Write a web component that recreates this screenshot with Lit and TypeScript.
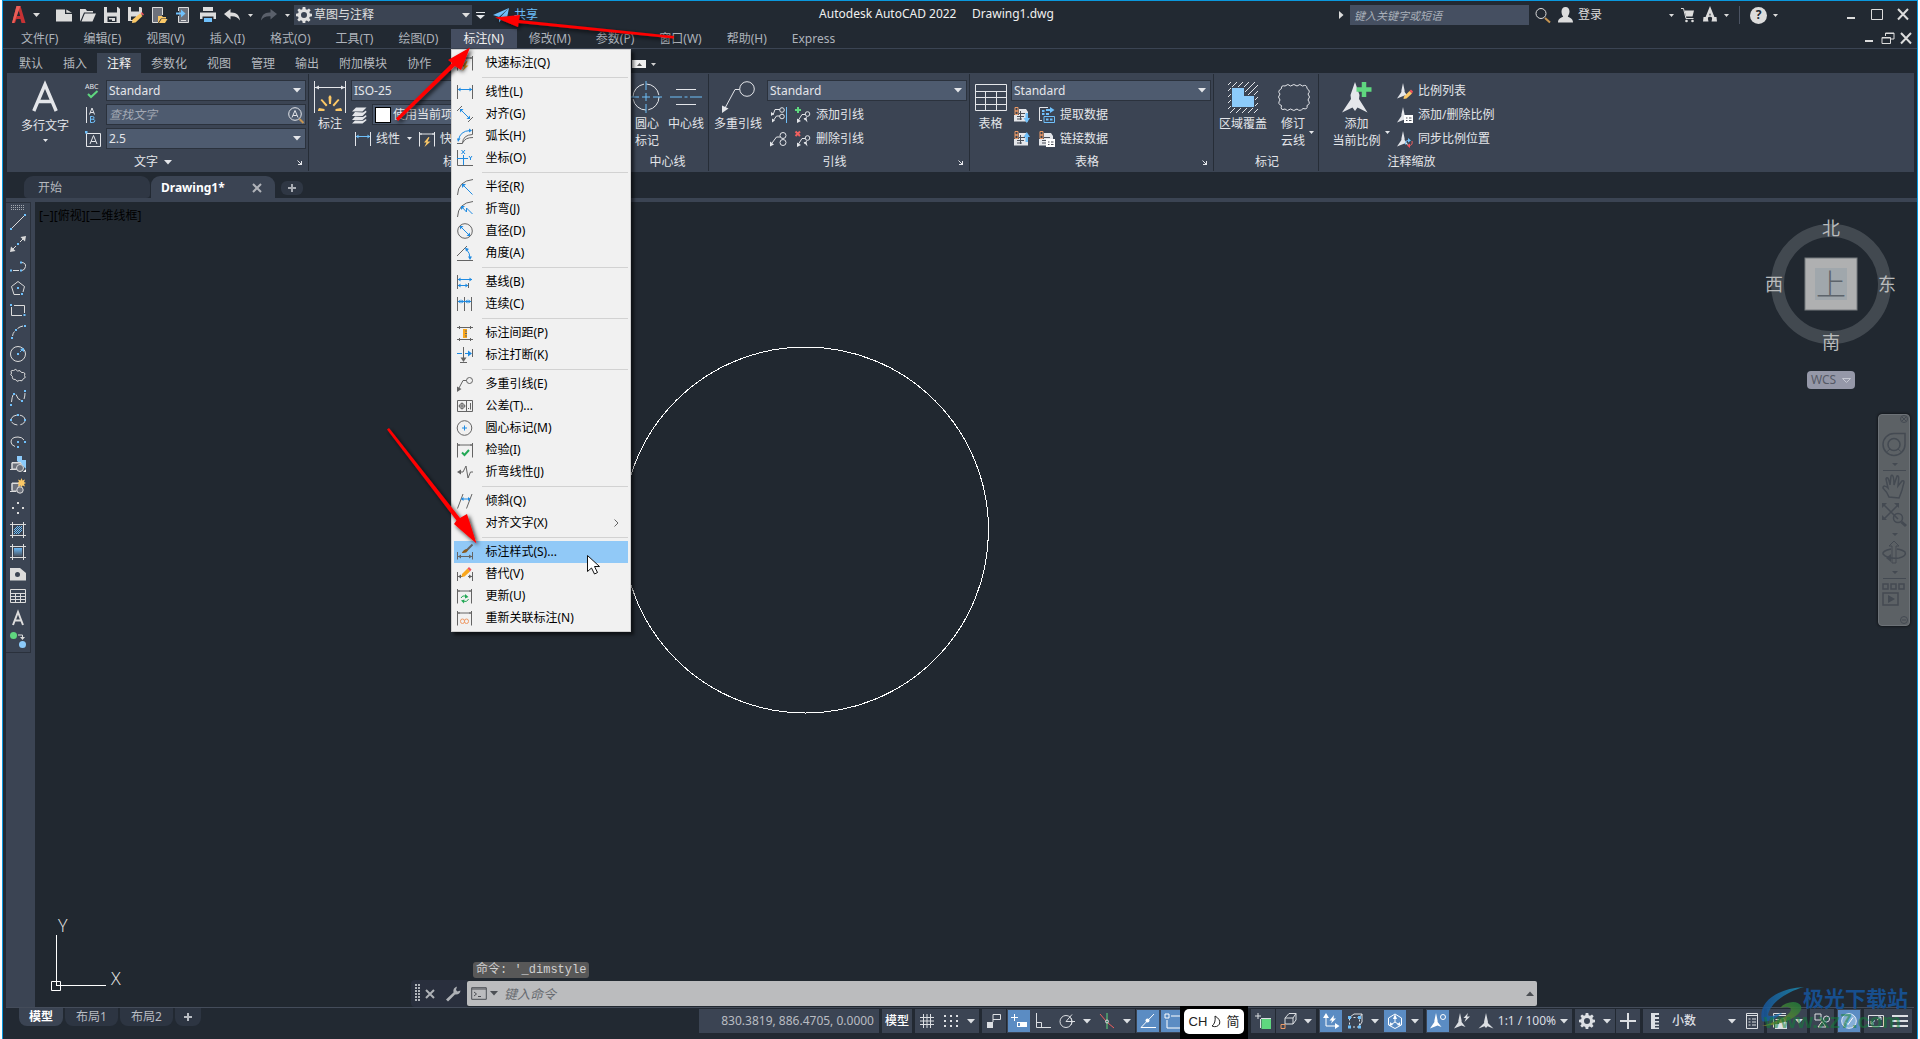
import { LitElement, html, svg, css, nothing, type TemplateResult, type SVGTemplateResult } from "lit";
import { customElement } from "lit/decorators.js";
import { classMap } from "lit/directives/class-map.js";

type Art = SVGTemplateResult;

const icon = (w: number, h: number, art: Art): TemplateResult =>
  html`<svg class="ic" width=${w} height=${h} viewBox="0 0 ${w} ${h}" aria-hidden="true">${art}</svg>`;
const i16 = (art: Art) => icon(16, 16, art);

const caret = html`<svg class="ic" width="8" height="5" viewBox="0 0 8 5" aria-hidden="true"><path class="f" d="M0 0H8L4 4.5Z" /></svg>`;
const caretS = html`<svg class="ic" width="5" height="3" viewBox="0 0 5 3" aria-hidden="true"><path class="f" d="M0 0H5L2.5 3Z" /></svg>`;

const gear = svg`<path class="f" fill-rule="evenodd" d="M6.7 0h2.6l.4 2.2 1.4.6L13 1.500 14.700 3.200 13.300 5l.6 1.400L16 6.700v2.600l-2.200.4-.6 1.400 1.300 1.900-1.800 1.700-1.800-1.300-1.400.6L9.300 16H6.700l-.4-2.100-1.400-.6-1.900 1.300L1.300 12.800 2.600 11 2 9.600 0 9.300V6.700l2.100-.4.600-1.400L1.400 3.100 3.100 1.400 5 2.700l1.300-.5ZM8 5a3 3 0 1 0 0 6a3 3 0 1 0 0-6Z"/>`;
const arrowhead = svg`<path class="f" d="M8 0L9.900 8.500V10L15.500 15.500 9.500 13.200 8 15 6.500 13.200.5 15.500 6.100 10V8.500Z"/>`;
const arrowheadS = svg`<path class="f" d="M6 0L7.600 7.500V9L11.500 14 7.500 12.500 0 15.500 4.400 9V7.500Z"/>`;

const art = {
  newDoc: svg`<path class="f" d="M0 2.500H9V7H16V14.500H0ZM10.300 2.500 16 5.800H10.300Z"/>`,
  open: svg`<path class="f" d="M0 2H5.500L7 4H13V5.500H4L1.500 11.500 0 14.500ZM4.800 6.500H16L12.500 14.500H1.500Z"/>`,
  save: svg`<path class="f" fill-rule="evenodd" d="M0 0H14L16 2V16H0ZM3 0V5.500H13V0ZM3.500 9.500V15H12.500V9.500Z"/><path class="f" d="M5 11H11V14H8V12.500H5Z"/>`,
  saveAs: svg`<path class="f" fill-rule="evenodd" d="M0 0H13L14 1V7L8 14H0ZM3 0V4.500H11V0ZM3 9.500V13H8V9.500Z"/><path class="y" d="M4.500 12.500 12 6.500 14.500 9 7.500 15.500 4 16Z"/><path class="r" d="M12.500 6 14 5.200 16 7.500 15 8.500Z"/>`,
  openWeb: svg`<path class="g6" stroke="none" d="M0 0H10V9H6V15H0Z"/><path d="M.5.5H10.500V8M.5.5V15.500H6"/><path class="y" d="M6 9H10L11 10H14V11.500H9L6 16ZM9.500 12H15.500L13 16H7Z"/>`,
  saveWeb: svg`<path class="g6" stroke="none" d="M3 0H12V16H3Z"/><path d="M2.500 4V.5H12.500V15.500H2.500V9M5 13.500H10"/><path class="bf" d="M0 5.500H5V2.500L9.500 6.500 5 10.500V7.500H0Z"/>`,
  print: svg`<path class="f" fill-rule="evenodd" d="M3 0H13V4H3ZM0 5.500H16V12H13.500V9.500H2.500V12H0Z"/><path class="bf" d="M4 11H12V15H4Z"/>`,
  undo: svg`<path class="f" d="M0 7 6.500 2V5.500C12 5 15.500 8 16 13.500C13.500 10 11 9 6.500 9.300V12.500Z"/>`,
  redo: svg`<path class="f" d="M16 7 9.500 2V5.500C4 5 .5 8 0 13.500C2.500 10 5 9 9.500 9.300V12.500Z"/>`,
  plane: svg`<path class="bf" d="M0 8 16 1 6 10 5.500 9.700ZM7 10.500 16 1 13.500 13.500 9.500 11.800ZM6 11.500 8.300 12.500 6 15.500Z"/>`,
  find: svg`<circle cx="6" cy="6.500" r="5"/><path class="ys" d="M10 11 15 15.500" stroke-width="2"/>`,
  person: svg`<path class="f" d="M8.500 0C11 0 12.500 2 12.500 4.500 12.500 7 11 9 10.800 9.500 12 10.800 16 11 16 15.500H1C1 11 5 10.800 6.200 9.500 5.500 8.800 4.500 7 4.500 4.500 4.500 2 6 0 8.500 0Z"/>`,
  cart: svg`<path d="M1 1.500H3.500L6 11.500H13.500"/><path class="f" d="M4.500 3.500H14L12.500 9.500H6Z"/><circle class="f" cx="6.500" cy="14" r="1.300"/><circle class="f" cx="12.500" cy="14" r="1.300"/>`,
  adesk: svg`<path d="M4 12.500 8 2.500 12 12.500" stroke-width="2.600"/><path class="f" d="M1.500 10H5.500L6.500 14.500H1ZM10.500 10H14.500L15 14.500H9.500ZM4 9Q8 7.500 12 9V10.500Q8 9 4 10.500Z"/>`,
  min: svg`<path d="M3 10H11" stroke-width="2"/>`,
  max: svg`<path d="M2.500 2.500H13.500V12.500H2.500Z"/>`,
  restore: svg`<path d="M5.500 5V2H14V8H11M2 6.500H10.500V12.500H2ZM2 7H10.500M5.500 2.500H14"/>`,
  close: svg`<path d="M3 2 13 12.500M13 2 3 12.500" stroke-width="2"/>`,

  spell: svg`<text class="t" x="0" y="6" font-size="7">ABC</text><path class="gs" d="M3 11 6 14 12.500 8" stroke-width="2"/>`,
  alignText: svg`<path d="M1.500 0V16M4.500 7.500 7 1 9.500 7.500M5.300 5.500H8.700"/><path class="b" d="M5.500 9.500H7.500Q9.500 9.500 9 11.500 8.500 12.200 7.500 12.200H5.500V9.500V15.500H7.500Q10 15.500 9.800 13.500 9.500 12.200 7.500 12.200"/>`,
  textH: svg`<path d="M1.500 2.500H15.500V15.500H1.500Z"/><path d="M5 13 8.500 4.500 12 13M6.200 10.500H10.800"/><path class="bf" d="M0 0H2.500V2.500H0Z"/>`,
  findA: svg`<circle cx="7" cy="7" r="6.300"/><path d="M4 10.500 7 3.500 10 10.500M5.200 8.500H8.800"/><path class="ys" d="M11.500 12 15.500 16" stroke-width="2"/>`,
  bigA: svg`<path d="M1.800 28 13 1.500 24.200 28M6 18.500H20" stroke-width="3.400"/>`,
  dimBig: svg`<path d="M.5 0V32M31.500 0V32M1 6.500H31"/><path class="f" d="M1 6.500 5 4.500V8.500ZM31 6.500 27 4.500V8.500Z"/><path class="y" d="M14.500 16 16 14 17.500 16 17 23H15ZM6.500 19 8 18 13.500 24 12 25.500ZM25.500 19 24 18 18.500 24 20 25.500ZM4 29 5 27 10.500 28V30H4ZM28 29 27 27 21.500 28V30H28Z"/>`,
  layers: svg`<path class="f" d="M5 .5H15.500L11.500 4.500H1ZM4 5 12 5.500 15 3.500 15.500 5 11.500 9H1ZM4 9.500 12 10 15 8 15.500 9.500 11.500 13H1ZM4 13.500 12 13.700 15 12 15.500 13.300 11.500 16.500H1Z"/>`,
  linear: svg`<path d="M.5 1V15M15.500 1V15"/><path class="b" d="M1 5.500H15"/><path class="bf" d="M1 5.500 3.500 3.500V7.500ZM15 5.500 12.500 3.500V7.500Z"/>`,
  quick: svg`<path d="M.5 1V15.500M15.500 1V15.500M1 3H15M2 2V4M14 2V4"/><path class="y" d="M9.500 6 5 11.500H7.500L5.500 16 11.500 10.500H8.500L10.500 6.500Z"/>`,
  centreBig: svg`<circle cx="15" cy="16" r="13" stroke-dasharray="18 2.400"/><path class="b" d="M15 0V9M15 12V20M15 23V32M-1 16H8M11 16H19M22 16H31"/>`,
  lineBig: svg`<path d="M6 8.500H26M6 23.500H26"/><path class="b" d="M0 16H12M14.500 16H17.500M20 16H32"/>`,
  leaderBig: svg`<circle cx="26" cy="8" r="7.300"/><path d="M18.500 8.500H14L3.500 28"/><path class="f" d="M1 32V24.500L7.500 27.500Z"/>`,
  lead1: svg`<path d="M3 8 5 2.500H10M3 14 6.500 9H10"/><circle cx="12" cy="3" r="2.300"/><circle cx="12" cy="9.500" r="2.300"/><path class="f" d="M1 9V5L4 7ZM2 15.500V11.500L5 13.500Z"/><path class="b" d="M16.500 0V16"/>`,
  lead2: svg`<path d="M2 12 6.500 6H10"/><circle cx="13" cy="4.500" r="3"/><circle cx="13" cy="11.500" r="3"/><path class="f" d="M0 15.500V10.500L4 13.500Z"/>`,
  leadAdd: svg`<path class="gs" d="M3 0V6M0 3H6" stroke-width="2"/><path d="M3.500 13 7 7.500H10M12 9.500 9.500 13"/><circle cx="12.500" cy="7" r="2.300"/><path class="f" d="M2 16V11.500L6 14ZM8.500 11H11.500L12.500 15.500Z"/>`,
  leadDel: svg`<path class="rs" d="M.5.5 5 5M5 .5.5 5" stroke-width="2"/><path d="M3.500 13 7 7.500H10M12 9.500 9.500 13"/><circle cx="12.500" cy="7" r="2.300"/><path class="f" d="M2 16V11.500L6 14ZM8.500 11H11.500L12.500 15.500Z"/>`,
  tableBig: svg`<path d="M.5.500H31.500V26.500H.5ZM.5 7.500H31.500M.5 13.500H31.500M.5 20.500H31.500M10.500 7.500V26M21.500 7.500V26"/>`,
  sheetDown: svg`<path class="f" d="M5 2H12L14 5V14.500H0V8H5Z"/><path class="hole" d="M5 6.500H11M3 9.500H10M3 12H8M6.500 4V13"/><path class="os" d="M1 .5H4V4H1ZM1 4H4V7.500H1Z"/><path class="bf" d="M11.500 6H14V11H16L12.800 16 9.500 11H11.500Z"/>`,
  sheetUp: svg`<path class="f" d="M5 2H12L14 5V14.500H0V8H5Z"/><path class="hole" d="M5 6.500H11M3 9.500H10M3 12H8M6.500 4V13"/><path class="os" d="M1 .5H4V4H1ZM1 4H4V7.500H1Z"/><path class="bf" d="M11.500 11H14V6H16L12.800 1 9.500 6H11.500Z"/>`,
  extract: svg`<path d="M5 .5H.5V13.500H3M5 .5H9"/><path class="bf" d="M3 3H5.500V5H3ZM3 6H5.500V8H3ZM7 6H10V8H7ZM7 2H11V0L15.500 3 11 6V4H7Z"/><path class="b" d="M5 9.500H15.500V15.500H5Z"/><path class="bf" d="M7 11.500H9.500V13.500H7ZM11 11.500H13.500V13.500H11Z"/>`,
  linkData: svg`<path class="f" d="M5 2H12L14 5V14.500H0V8H5Z"/><path class="hole" d="M5 6.500H11M3 9.500H7M3 12H7"/><path class="os" d="M1 .5H4V4H1ZM1 4H4V7.500H1Z"/><path class="w" d="M7 8H16V16H7Z"/><path class="hole" d="M9 11H10.500M12 11H14.500M9 13.500H10.500M12 13.500H14.500"/>`,
  wipeout: svg`<path d="M1 4 4 1M1 10 10 1M1 16 16 1M1 22 22 1M1 28 28 1M3 32 31 4M9 32 31 10M15 32 31 16M21 32 31 22M27 32 31 28"/><path class="bg" d="M4 6H18V14H28V27H4Z"/><path class="bf2" d="M5 7H17V15H27V26H5Z"/>`,
  cloudBig: svg`<path d="M3.500 4.500Q3 1 7 2 10 -1 12.500 2 16 -1 19 2 22 -1 24.500 2 29 0 29 4.500 33 7 30 10 33 13 30 16 33 20 29 21.500 30 26 25 24.500 22 28 19 25 16 28 12.500 25 9 28 7 25 2 27 3.500 21.500 -1 20 2 16 -1 13 2 10 -1 7 3.500 4.500Z"/>`,
  scaleBig: svg`<path class="f" d="M13 1 17.500 14 17 18 25.500 31.500 15.500 26.500 13 30 10.500 26.500 0 31.500 9 18 8.500 14Z"/><path class="gs" d="M22 1V16M14.500 8.500H29.500" stroke-width="4.500"/>`,
  scaleList: svg`${arrowheadS}<path class="y" d="M7 13.500 12.500 8 15 10.500 9.500 15.500 6.500 16Z"/><path class="r" d="M12.500 8 14 6.500 16 8.500 15 10.500Z"/>`,
  scaleAdd: svg`${arrowheadS}<path class="w" d="M7 8H16V16H7Z"/><path class="hole" d="M9 11H10.500M12 11H14.500M9 13.500H10.500M12 13.500H14.500"/>`,
  scaleSync: svg`${arrowheadS}<path class="b" d="M8.500 13.500Q8 9 12 9.500"/><path class="bf" d="M11 7 14 9.500 11 11.500Z"/><path class="rs" d="M15 10Q16 14.500 12 14.500"/><path class="r" d="M13 12.500 10 14.500 13 17Z"/>`,
  launcher: svg`<path d="M.5.500 4 4M4.500 1V5M1 4.500H5"/>`,
  wrench: svg`<path class="f" d="M1 13.500 8.500 6.500Q7.500 2 12 .5L11 4 12.500 5.500 15.500 4.500Q15 9 10 8.500L3 15.500Z"/>`,
  prompt: svg`<path d="M.7.7H15.300V12.300H.7ZM.7 2H15.300M3 5 5.500 7 3 9M7 9.500H10"/>`,
};

const drawTools: [string, Art][] = [
  ["直线", svg`<path d="M2 14 14 2"/><path class="bf" d="M0 14H2V16H0ZM14 0H16V2H14Z"/>`],
  ["构造线", svg`<path d="M2 14 6 10M10 6 14 2"/><path class="f" d="M0 16 1 10.500 5.500 15ZM16 0 10.500 1 15 5.500Z"/><path class="bf" d="M7 7H9V9H7Z"/>`],
  ["多段线", svg`<path d="M3 12.500H9M12 4.500Q16 5 15.500 8.500 15 12 12 12.500"/><path class="bf" d="M0 11.500H2V13.500H0ZM10 3.500H12V5.500H10ZM10 11.500H12V13.500H10Z"/>`],
  ["多边形", svg`<path d="M10 14.500H4L1.500 6.500 8 1.500 14.500 6.500 13 12"/><path class="bf" d="M7 7H9V9H7ZM11 13H13V15H11Z"/>`],
  ["矩形", svg`<path d="M4 3.500H14.500V11M12 13.500H1.500V5"/><path class="bf" d="M0 2H2V4H0ZM13.500 12H15.500V14H13.500Z"/>`],
  ["圆弧", svg`<path d="M2.500 12Q3 9 4.500 7.500M7.500 4.500Q10 2.500 13 2"/><path class="bf" d="M1 13H3V15H1ZM5 5H7V7H5ZM14 1H16V3H14Z"/>`],
  ["圆", svg`<circle cx="8" cy="8" r="7.500"/><path class="b" d="M10 6 12 4"/><path class="bf" d="M7 7H9V9H7ZM14 2V6L10 3Z"/>`],
  ["修订云线", svg`<path d="M1.500 5Q0 2 3.500 2.500 6 0 7.500 3 10.500 1.500 11.500 4.500 16 4 14.500 7.500 16.500 10 13.500 10.500 12.500 14 9.500 12.500 6.500 14.500 5.500 11.500 1.500 11.500 2.500 8.500 -.5 7 1.500 5Z"/>`],
  ["样条曲线", svg`<path d="M1.500 12Q2 7 3 5M6 4.500Q8 10 10.500 10M14 9Q15 6 15 3"/><path class="bf" d="M0 14H2V16H0ZM3 3H5V5H3ZM11 10H13V12H11ZM14 0H16V2H14Z"/>`],
  ["椭圆", svg`<ellipse cx="8" cy="8" rx="7" ry="5" stroke-dasharray="7 3"/><path class="bf" d="M0 7H2V9H0ZM14 7H16V9H14ZM7 2H9V4H7Z"/>`],
  ["椭圆弧", svg`<path d="M14 6Q12 3 8 3 1 3 1 8 1 11 5 12.500"/><path class="bf" d="M7 7H9V9H7ZM14 7H16V9H14ZM7 12H9V14H7Z"/>`],
  ["插入块", svg`<path class="bf2" d="M7 0H12V4H16V13L12 9 7 5Z"/><path class="g6" d="M2 7H11V13H2Z"/><path d="M2 13V6.500H11M0 13.500H7"/><circle class="g6" cx="10" cy="12" r="3.500"/><path class="w" d="M13 16H16V13Z"/>`],
  ["创建块", svg`<path class="g6" d="M2 5H9V13H2Z"/><path d="M2 12V5.500H9M0 13.500H6"/><circle class="g6" cx="10" cy="12" r="3.200"/><path class="y" d="M11.500 0 12.500 2.500 15 1.500 14 4 16 5 14 6 15 8.500 12.500 7.500 11.500 9.500 10.500 7.500 8 8.500 9 6 7.500 5 9 4 8 1.500 10.500 2.500Z"/>`],
  ["多点", svg`<path class="f" d="M7 2H9V4H7ZM2 7H4V9H2ZM12 7H14V9H12ZM7 12H9V14H7Z"/>`],
  ["图案填充", svg`<path d="M2.500 0V16M13.500 0V16M0 2.500H16M0 13.500H16"/><path class="b" d="M4 8 8 4M4 12 12 4M8 12 12 8M4 10 10 4M6 12 12 6"/>`],
  ["渐变色", svg`<defs><linearGradient id="gr" x1="0" y1="0" x2="0" y2="1"><stop offset="0" stop-color="#6ab8f5"/><stop offset="1" stop-color="#4b5563"/></linearGradient></defs><path d="M2.500 0V16M13.500 0V16M0 2.500H16M0 13.500H16"/><rect x="4" y="4" width="8" height="8" fill="url(#gr)" stroke="none"/>`],
  ["面域", svg`<path class="f" fill-rule="evenodd" d="M0 2H10L16 7V14.500H0ZM7.500 6A2.500 2.500 0 1 0 7.500 11A2.500 2.500 0 1 0 7.500 6Z"/>`],
  ["表格", svg`<path d="M.5 1.500H15.500V14.500H.5ZM.5 5.500H15.500M.5 8.500H15.500M.5 11.500H15.500M5.500 5.500V14.500M10.500 5.500V14.500"/>`],
  ["多行文字", svg`<path d="M3 15 8 2 13 15M5 10.500H11" stroke-width="2"/>`],
  ["添加选定对象", svg`<circle class="gf" cx="3.500" cy="3.500" r="3.500"/><circle class="bf2" cx="12.500" cy="12.500" r="3.500"/><path d="M8 3H12.500V6"/><path class="f" d="M10 5H15L12.500 8Z"/>`],
];

interface Entry { label: string; art?: Art; hot?: boolean; sub?: boolean }
const dimMenu: Entry[][] = [
  [{ label: "快速标注(Q)", art: art.quick }],
  [
    { label: "线性(L)", art: art.linear },
    { label: "对齐(G)", art: svg`<path d="M0 5 5 0M11 16 16 11"/><path class="b" d="M3 3 13 13"/><path class="bf" d="M3 3H6.500L3 6.500ZM13 13H9.500L13 9.500Z"/>` },
    { label: "弧长(H)", art: svg`<path d="M0 15.500H5.500V15Q6 7 15.500 6.500V1"/><path d="M6 14.500Q8 9.500 16 9.500"/><path class="b" d="M1.500 12Q3 3 13 2.500"/><path class="bf" d="M1 14 0 10.500H3.500ZM15 2.500 12 .5V4.500Z"/>` },
    { label: "坐标(O)", art: svg`<path d="M.5 0V15.500H16"/><path class="b" d="M0 8.500H11M6.500 5V15M4.500 0 8 4M8 0 4.500 4M12 6 13.500 8 15 6M13.500 8V10"/>` },
  ],
  [
    { label: "半径(R)", art: svg`<path d="M.5 16Q1 2 16 .5"/><path class="b" d="M6 6 15.500 15.500"/><path class="bf" d="M5 5H9L5 9Z"/>` },
    { label: "折弯(J)", art: svg`<path d="M.5 16Q1 2 16 .5"/><path class="b" d="M5 6 9.500 11V7L15.500 13"/><path class="bf" d="M4 5H8L4 9Z"/>` },
    { label: "直径(D)", art: svg`<circle cx="8" cy="8" r="7.300"/><path class="b" d="M3 3 13 13"/><path class="bf" d="M3 3H6.500L3 6.500ZM13 13H9.500L13 9.500Z"/>` },
    { label: "角度(A)", art: svg`<path d="M0 11 10 1M0 15.500H16"/><path class="b" d="M9.500 4.500Q13 8 13 13"/><path class="bf" d="M8 2.500 12 4 9 6.500ZM13 15 11 11.500H15Z"/>` },
  ],
  [
    { label: "基线(B)", art: svg`<path d="M.5 1V15M11.500 9V14"/><path class="b" d="M1 5.500H15M1 11.500H11"/><path class="bf" d="M1 5.500 3.500 3.500V7.500ZM15 5.500 12.500 3.500V7.500ZM1 11.500 3.500 9.500V13.500ZM11 11.500 8.500 9.500V13.500Z"/>` },
    { label: "连续(C)", art: svg`<path d="M.5 1V15M7.500 1V15M14.500 1V15"/><path class="b" d="M1 5.500H14"/><path class="bf" d="M1 5.500 3.500 3.500V7.500ZM7 5.500 4.500 3.500V7.500ZM8 5.500 10.500 3.500V7.500ZM14 5.500 11.500 3.500V7.500Z"/>` },
  ],
  [
    { label: "标注间距(P)", art: svg`<path d="M0 2.500H16M0 14.500H16M2.500 1V4M13.500 1V4M2.500 13V16M13.500 13V16"/><path class="y" d="M6 4H10V13H6Z"/><path d="M8 6H10M8 8.500H10M8 11H10"/>` },
    { label: "标注打断(K)", art: svg`<path d="M15.500 2V10M6.500 0V12M3 15.500H10"/><path class="b" d="M0 6.500H5M8 6.500H13"/><path class="bf" d="M15 6.500 11 3.500V9.500Z"/><path class="f" d="M3.500 10.500H9.500L6.500 15Z"/>` },
  ],
  [
    { label: "多重引线(E)", art: svg`<circle cx="12.500" cy="4.500" r="3"/><path d="M9.500 4.500H6L2 12"/><path class="f" d="M0 16V10.500L4.500 13Z"/>` },
    { label: "公差(T)...", art: svg`<path d="M.5 2.500H15.500V13.500H.5ZM9.500 2.500V13.500"/><circle cx="5" cy="8" r="2.500"/><path d="M1.500 8H8.500M5 4.500V11.500M13.500 5V11.500M11 10.500H12"/>` },
    { label: "圆心标记(M)", art: svg`<circle cx="7.500" cy="8" r="7.300"/><path class="b" d="M5 8H10M7.500 5.500V10.500"/>` },
    { label: "检验(I)", art: svg`<path d="M.5 1V15.500M15.500 1V15.500M1 3H15M2 2V4M14 2V4"/><path class="gs" d="M5 10.500 7.500 13 12 8" stroke-width="2"/>` },
    { label: "折弯线性(J)", art: svg`<path d="M2 8H6L9 2 11 14 13.500 8H16"/><path class="f" d="M0 8 4 5.500V10.500Z"/>` },
  ],
  [
    { label: "倾斜(Q)", art: svg`<path d="M.5 15.500 6 1M9.500 15.500 15 1"/><path class="b" d="M4.500 6H13"/><path class="bf" d="M4 6 6.500 4V8ZM13.500 6 11 4V8Z"/>` },
    { label: "对齐文字(X)", sub: true },
  ],
  [
    { label: "标注样式(S)...", hot: true, art: svg`<path d="M.5 8V15.500M15.500 8V15.500M1 12.500H15"/><path class="f" d="M1 12.500 4 10.500V14.500ZM15 12.500 12 10.500V14.500Z"/><path d="M15.500.5 10 6" stroke-width="2"/><path class="br" d="M5 8.500Q7 5 10 5L11 6.500Q9.500 9.500 5 9Z"/>` },
    { label: "替代(V)", art: svg`<path d="M.5 6V15M15.500 6V15M1 10.500H6M11 10.500H15"/><path class="f" d="M1 10.500 4 8.500V12.500ZM15 10.500 12 8.500V12.500Z"/><path class="y" d="M5 8 10.500 2.500 13 5.500 7.500 10.500 4.500 11Z"/><path class="r" d="M10.500 2.500 12 1 14.500 3.500 13 5.500Z"/>` },
    { label: "更新(U)", art: svg`<path d="M.5 1V15.500M14.500 1V15.500M1 3H14M2 2V4M13 2V4"/><path class="gs" d="M4 10Q5 7 9 8M11.500 11Q10 14.500 6 13"/><path class="gf" d="M8 6 11.500 9 8 10.500ZM7.500 11.500 4 12.500 7 15.500Z"/>` },
    { label: "重新关联标注(N)", art: svg`<path d="M.5 1V15.500M14.500 1V15.500M1 3H14M2 2V4M13 2V4"/><rect class="os" x="3.500" y="9" width="4" height="4.500" rx="2"/><rect class="os" x="7.500" y="9" width="4" height="4.500" rx="2"/>` },
  ],
];

const menusLeft = ["文件(F)", "编辑(E)", "视图(V)", "插入(I)", "格式(O)", "工具(T)", "绘图(D)"];
const menusRight = ["修改(M)", "参数(P)", "窗口(W)", "帮助(H)", "Express"];
const ribbonTabs = ["默认", "插入", "注释", "参数化", "视图", "管理", "输出", "附加模块", "协作"];

const st = {
  grid: svg`<path d="M4.500 1V15M8 1V15M11.500 1V15M1 4.500H15M1 8H15M1 11.500H15"/>`,
  snap: svg`<path stroke-width="2" stroke-dasharray="2 4" d="M1 3H16M1 8H16M1 13H16"/>`,
  infer: svg`<path d="M7 9V1.500H14.500V6.500H7"/><path class="f" d="M1 9H7V15H1Z"/>`,
  dyn: svg`<path d="M3.500 1V8M0 4.500H7"/><path class="w" d="M6 9H16V14H6Z"/><path class="bluehole" d="M8 10V13"/>`,
  ortho: svg`<path d="M1.500 0V14.500H16M1.500 9.500H6.500V14.500"/>`,
  polar: svg`<circle cx="7" cy="8.500" r="6"/><path d="M7 8.500H16M7 8.500 13 1.500M12 5Q14 9 12 12"/>`,
  iso: svg`<path class="gs" d="M8 0V16"/><path class="rs" d="M1 1 7 8M9 10 15 15"/><circle cx="8" cy="8.500" r="1.500"/>`,
  track: svg`<path d="M1 14.500H16M1 14.500 14 1"/><circle class="f" cx="7.500" cy="7.500" r="2"/>`,
  osnap: svg`<path d="M1 1H5V5H1ZM7 3H16M3 7V15H16"/>`,
  weight: svg`<path d="M1 3H15M1 7.500H15" stroke-width="2"/><path d="M1 13H15" stroke-width="3"/>`,
  transp: svg`<path d="M1 1H11V11H1ZM5 5H15V15H5Z"/>`,
  cycle: svg`<path d="M3 0V6M0 3H6M6 5.500H16M5.500 6V15"/><path class="gf" d="M6.500 6H16V16H6.500Z"/>`,
  cube: svg`<path d="M5 5 9 .5H16L13 5ZM5 5V11H13V5M13 11 16 7V.5"/><path class="os" d="M1 11.500H5V15.500H1Z"/>`,
  ducs: svg`<path d="M3 3V13H13"/><path class="f" d="M0 5 3 0 6 5ZM12 10 16.500 13 12 16ZM11 2 6.500 7.500H9L8 10.500 13 5.500H10.500Z"/>`,
  filter: svg`<path d="M3 4 7 1H15L13 4M15 1V9L13 12" /><path stroke-dasharray="2 2" d="M2.500 4.500H12.500V14H2.500Z"/><path class="bf" d="M1 3H4V6H1ZM11 3H14V6H11ZM1 12.500H4V15.500H1ZM11 12.500H14V15.500H11Z"/>`,
  gizmo: svg`<path d="M8 1 14.500 5V12L8 15.500 1.500 12V5ZM8 3V9L3.500 12M8 9 12.500 12"/><path class="f" d="M8 1 10 6H6ZM2 13 3.500 9 6 12ZM14 13 12.500 9 10 12Z"/>`,
  annVis: svg`${arrowheadS}<circle cx="13" cy="4" r="2.500"/>`,
  annAuto: svg`${arrowheadS}<path class="f" d="M14 0 9.500 5H12L10.500 9 16 3.500H13Z"/>`,
  plus: svg`<path d="M8 0V16M0 8H16" stroke-width="2"/>`,
  ruler: svg`<path class="f" d="M0 0H8V2H4V4H8V6H4V8H8V9.500H4V11.500H8V13H4V14.500H8V16H0Z"/>`,
  props: svg`<path d="M2.500.5H13.500V15.500H2.500ZM2 2.500H14M4.500 6H6.500M8 6H12M4.500 9H6.500M8 9H12M4.500 12H6.500M8 12H12"/>`,
  lock: svg`<path d="M2.500 14.500V.5H15M2.500 2.500H15M4.500 6.500H8"/><path class="f" d="M8 9H16V16H4V11H8Z"/><path d="M10 9V6.500Q12 4 14 6.500V9"/>`,
  isolate: svg`<path d="M1 1H7V7H1ZM4 14 8 8.500 12 14Z"/><circle cx="12.500" cy="6" r="3"/>`,
  perf: svg`<circle class="glow" cx="8" cy="8" r="7.300"/><path d="M4.500 9 7 11.500 12 4.500"/>`,
  full: svg`<path d="M.5 2.500H15.500V13.500H.5ZM3 11 7 7.500M9 7 13 4M3 8V11H6M10 4H13V7"/>`,
  burger: svg`<path d="M0 3H16M0 8H16M0 13H16" stroke-width="2"/>`,
};

@customElement("app-root")
export class AppRoot extends LitElement {
  static styles = css`
    :host { display: block; background: #fff; padding: 0 2px; font-family: "Noto Sans", "Noto Sans CJK SC", sans-serif; font-size: 12px; line-height: 16px; color: #e4e6ea; }
    * { box-sizing: border-box; }
    button, select, input { font: inherit; color: inherit; margin: 0; padding: 0; border: 0; background: none; border-radius: 0; outline: 0; }
    a { color: inherit; text-decoration: none; }
    .ic { display: block; flex: none; overflow: visible; fill: none; stroke: currentColor; stroke-width: 1; --blue: #6fc0fb; --green: #5fd77f; --gold: #fbc867; }
    .ic .f { fill: currentColor; stroke: none; }
    .ic .b { stroke: var(--blue); }
    .ic .bf { fill: var(--blue); stroke: none; }
    .ic .bf2 { fill: #8ccbfb; stroke: none; }
    .ic .y { fill: var(--gold); stroke: none; }
    .ic .ys { stroke: #c69552; }
    .ic .r { fill: #f0525a; stroke: none; }
    .ic .rs { stroke: #f0605f; }
    .ic .gs { stroke: var(--green); }
    .ic .gf { fill: var(--green); stroke: none; }
    .ic .os { stroke: #ee9a66; }
    .ic .w { fill: #fff; stroke: none; }
    .ic .br { fill: #8a5a1e; stroke: none; }
    .ic .g6 { fill: #6d717b; }
    .ic .bg { fill: #3b4453; stroke: none; }
    .ic .hole { stroke: #4a4f58; }
    .ic .bluehole { stroke: #5b8cc3; stroke-width: 2; }
    .ic .glow { fill: #86afd8; stroke: #e4ecf5; }
    .ic .t { fill: currentColor; stroke: none; }

    .window { display: flex; flex-direction: column; height: 100vh; min-height: 760px; position: relative; overflow: hidden; border: 1px solid #0a98de; border-bottom: 0; background: #222932; }

    .title { display: flex; align-items: center; height: 28px; padding: 0 6px 0 8px; flex: none; }
    .title button { display: flex; }
    .quick { display: flex; align-items: center; gap: 8px; color: #dcdcdc; }
    .quick .appmenu { margin-right: 8px; }
    .logo { color: #c63234; margin-right: 6px; }
    .quick .dim { color: #5a606b; }
    .workspace { display: flex; align-items: center; gap: 2px; width: 178px; height: 20px; padding: 0 2px; background: #3b4453; margin: 0 4px; color: #e0e0e0; }
    .pick { display: grid; align-items: center; flex: 1; min-width: 0; }
    .pick > * { grid-area: 1 / 1; }
    .pick select { appearance: none; width: 100%; height: 100%; }
    .pick .ic { justify-self: end; margin-right: 4px; pointer-events: none; }
    .workspace .pick .ic { margin-right: 0; }
    .share { display: flex; align-items: center; gap: 5px; color: #6bbcf7; margin-left: 8px; }
    .caption { flex: 1; text-align: center; white-space: pre; color: #f0f0f0; padding: 0 4px 2px 0; }
    .search { display: flex; align-items: center; gap: 6px; color: #dcdcdc; }
    .search input { width: 179px; height: 20px; background: #454f61; padding: 0 4px; font-size: 11px; font-style: italic; }
    .search input::placeholder { color: #a9afb9; opacity: 1; }
    .signin { display: flex; align-items: center; gap: 5px; width: 106px; }
    .title .help { display: block; width: 17px; height: 17px; border-radius: 50%; background: #dcdcdc; color: #222932; font-weight: 700; text-align: center; }
    .rule { width: 1px; height: 18px; background: #4b5363; margin: 0 4px; }
    .winbtns { display: flex; gap: 10px; color: #dcdcdc; margin-left: 65px; }

    .menubar { display: flex; align-items: stretch; height: 20px; flex: none; padding: 0 2px 0 6px; border-bottom: 1px solid #3b4453; color: #aeb3bb; }
    .menubar button { height: 19px; padding: 0 13px 0 12px; white-space: nowrap; }
    .menubar .open { background: #454e61; color: #f0f0f0; }
    .anchor { position: relative; }
    .menubar .mdi { display: flex; margin-left: auto; align-items: center; color: #dcdcdc; }
    .menubar .mdi button { padding: 0 1px; display: flex; align-items: center; }

    .popup { position: absolute; z-index: 5; left: 0; top: 20px; width: 180px; padding: 2px; border: 1px solid #cfcfcf; background: #f1f1f1; color: #000; box-shadow: 3px 3px 3px rgba(0,0,0,.55); }
    .popup .ic { color: #646464; --blue: #1f8be2; --green: #22a855; --gold: #f9a61a; }
    .popup hr { border: 0; height: 1px; margin: 3px 0 3px 28px; background: #d2d2d2; }
    .menubar .popup button { display: flex; align-items: center; width: 100%; height: 22px; padding: 0 9px 0 3px; gap: 12px; text-align: left; }
    .popup .gutter { width: 16px; flex: none; }
    .popup .name { flex: 1; }
    .popup .hot { background: #91c9f7; }

    .tabs { display: flex; align-items: flex-end; height: 24px; flex: none; padding-left: 6px; color: #b4b8be; }
    .tabs button { height: 20px; padding: 1px 10px 0; white-space: nowrap; }
    .tabs .on { background: #3b4453; color: #f2f2f2; }
    .tabs .fold { display: grid; place-items: center; width: 14px; height: 8px; padding: 0; margin: 0 5px 5px 191px; background: #f0f0f0; color: #555; }
    .tabs .foldmenu { height: auto; padding: 0; margin-bottom: 7px; color: #d0d0d0; }

    .ribbon { display: flex; height: 99px; flex: none; margin: 0 3px 0 4px; background: #3b4453; }
    .panel { display: flex; flex-direction: column; flex: none; margin: 1px 0; padding: 6px 2px 0 4px; border-right: 1px solid #262d37; }
    .panel:last-child { border-right: 0; }
    .body { display: flex; flex: 1; min-height: 0; }
    .foot { display: flex; align-items: center; height: 18px; }
    .foot span { flex: 1; display: flex; align-items: center; justify-content: center; gap: 6px; }
    .foot button { width: 11px; padding-left: 2px; }
    .big { display: flex; flex-direction: column; align-items: center; gap: 2px; height: 70px; padding: 1px 0 0; white-space: nowrap; }
    .big .art { height: 32px; display: grid; place-items: center; }
    .big .lines { display: flex; align-items: flex-end; gap: 4px; line-height: 17px; }
    .big .more { padding-left: 8px; }
    .big .lines .ic { margin-bottom: 15px; }
    .rows { display: flex; flex-direction: column; gap: 3px; }
    .row { display: flex; align-items: center; gap: 5px; height: 21px; }
    .row button { display: flex; align-items: center; gap: 5px; white-space: nowrap; }
    .field { height: 21px; width: 200px; flex: none; background: #4e5b6f; border: 1px solid #2b323d; }
    .field select, .field input { width: 100%; height: 19px; padding: 0 2px; }
    .field input::placeholder { color: #a3a9b4; opacity: 1; font-style: italic; }
    .find .ic { margin-right: 1px; }
    .wide { width: 230px; }
    .layer { display: flex; align-items: center; width: 210px; padding-left: 2px; }
    .swatch { width: 16px; height: 16px; flex: none; background: #fff; border: 1px solid #000; }
    .p1 { width: 302px; } .p1 .big { width: 69px; gap: 5px; } .p1 .rows { width: 221px; margin-left: 6px; } .p1 .lead { width: 16px; }
    .p2 { width: 316px; } .p2 .big { width: 34px; margin-right: 4px; }
    .p2 .row3 { padding-left: 4px; }
    .p2 .row3 > * { margin-right: 2px; }
    .p3 { width: 84px; } .p3 .body { gap: 5px; padding-left: 2px; }
    .p4 { width: 261px; } .p4 .big { width: 50px; margin-right: 4px; }
    .pairs { padding-left: 3px; }
    .pairs .row { gap: 9px; }
    .p5 { width: 244px; } .p5 .big { width: 34px; margin-right: 4px; }
    .p6 { width: 105px; } .p6 .body { gap: 6px; padding-left: 1px; }
    .p7 { width: 183px; padding-left: 9px; } .p7 .big { width: 58px; margin-right: 11px; }
    .p7 .foot { margin-left: -5px; }

    .docs { display: flex; align-items: flex-end; height: 26px; flex: none; padding-left: 21px; }
    .doc { display: flex; align-items: center; justify-content: space-between; height: 22px; width: 126px; padding: 2px 14px 0; background: #2f3744; color: #b4b8be; border-radius: 9px 9px 4px 4px; }
    .doc.on { width: 124px; padding: 2px 14px 0 10px; margin-left: 1px; background: #3b4453; color: #fff; font-weight: 700; border-radius: 9px 9px 0 0; }
    .doc button { color: #b0b3b9; display: flex; }
    .adddoc { width: 22px; height: 14px; margin: 0 0 3px 6px; background: #2f3744; border-radius: 6px; color: #a9adb4; display: grid; place-items: center; }

    .main { display: flex; flex: 1; min-height: 0; margin-left: 3px; border-top: 4px solid #3b4453; }
    .side { width: 29px; flex: none; background: #3b4453; }
    .tools { width: 25px; border: 1px solid #2a313c; border-left-width: 0; padding: 1px 0 1px; display: flex; flex-direction: column; align-items: center; color: #dcdcdc; }
    .tools .grip { height: 5px; margin: 1px 0; color: #a4a9b0; }
    .tools button { height: 22px; display: grid; place-items: center; }
    .canvas { position: relative; flex: 1; min-width: 0; background: #212830; }
    .canvas > * { position: absolute; }
    .vp { left: 4px; top: 6px; color: #000; }
    .drawing { left: 0; top: 0; }
    .cube { right: 20px; top: 14px; width: 132px; height: 140px; }
    .cube .hz { font: 18px "Noto Sans CJK SC", sans-serif; fill: #b9bbbc; }
    .cube .face { font: 300 30px "Noto Sans CJK SC", sans-serif; fill: #5d646b; }
    .wcs { right: 62px; top: 169px; width: 48px; height: 18px; border-radius: 4px; background: #9598a8; color: #555a66; display: flex; align-items: center; justify-content: space-between; padding: 0 4px; }
    .wcs .ic { color: #c5c8d2; }
    .nav { right: 7px; top: 212px; width: 32px; height: 212px; border-radius: 4px; border: 1px solid #6d7277; background: #5c6165; color: #444a52; box-shadow: 0 0 2px 1px #15191e; }
    .ucs { left: 12px; bottom: 9px; color: #fff; }
    .ucs text { fill: #e8e8e8; stroke: none; font: 300 18px "Open Sans", sans-serif; }
    .history { left: 438px; bottom: 29px; height: 16px; padding: 0 3px; border-radius: 3px; background: #585858; color: #d0d0d0; font-family: "Liberation Mono", "Noto Sans CJK SC", monospace; white-space: pre; }
    .cmd { left: 376px; right: 380px; bottom: 0; height: 27px; display: flex; color: #aeb1b6; }
    .cmd .handle { display: flex; align-items: center; gap: 10px; width: 56px; background: #292f3d; padding-left: 4px; border-radius: 4px 0 0 4px; }
    .cmd .grip { color: #b0b4ba; margin-right: -5px; }
    .cmd .handle button { display: flex; }
    .cmd .entry { flex: 1; display: flex; align-items: center; gap: 3px; margin: 1px 0 1px; background: #bbbcbe; color: #4c4f54; padding: 0 3px 0 4px; border-radius: 2px; }
    .cmd input { flex: 1; font-size: 13px; font-style: italic; padding-left: 3px; }
    .cmd input::placeholder { color: #686b70; opacity: 1; }
    .up { transform: rotate(180deg); }

    .bottom { display: flex; height: 32px; flex: none; margin: 0 3px; padding: 0 2px 0 13px; border-top: 1px solid #444c5a; align-items: flex-start; background: #222932; }
    .layouts { display: flex; gap: 2px; }
    .layouts button { height: 18px; width: 53px; background: #2d3542; color: #b8bcc2; border-radius: 0 0 8px 8px; }
    .layouts .on { width: 44px; background: #3b4453; color: #fff; font-weight: 700; }
    .layouts .plus { width: 26px; display: grid; place-items: center; }
    .status { display: flex; gap: 3px; margin: 1px 0 0 auto; height: 24px; color: #dcdfe3; }
    .grp { display: flex; background: #3b4453; white-space: nowrap; }
    .status button { width: 24px; height: 24px; display: grid; place-items: center; }
    .status .lab { width: 30px; font-weight: 500; color: #fff; }
    .status .arr { width: 16px; }
    .status .arr.sep { width: 17px; }
    .status .sep { width: 25px; border-right: 1px solid #222932; }
    .status .lit { background: #5b8cc3; box-shadow: inset 0 0 0 1px #3b4453; color: #fff; }
    .coords { width: 180px; justify-content: flex-end; padding: 4px 5px 0 0; color: #b9bcc2; }
    .status .scale { width: 74px; display: flex; align-items: center; justify-content: flex-end; gap: 4px; padding-right: 4px; }
    .status .units { width: 97px; display: flex; align-items: center; padding: 0 4px 0 8px; }
    .units select { appearance: none; width: 60px; height: 24px; margin: 0 auto 0 13px; font-weight: 500; }

    .ime { position: absolute; left: 1177px; bottom: 0; width: 68px; height: 33px; padding: 3px 4px 5px; background: #000; }
    .ime div { display: flex; align-items: center; justify-content: center; gap: 4px; height: 25px; border-radius: 5px; background: #fff; color: #222; font-family: "Liberation Sans", "Noto Sans CJK SC", sans-serif; font-size: 13px; }
    .mark { position: absolute; right: 5px; bottom: 6px; pointer-events: none; }
    .over { position: absolute; left: 0; top: 0; z-index: 8; pointer-events: none; }
  `;

  private pick(label: string, value: string) {
    return html`<span class="pick"><select aria-label=${label}><option>${value}</option></select>${caret}</span>`;
  }

  private big(a: TemplateResult, lines: string[], drop = false) {
    return html`<button class="big"><span class="art">${a}</span>
      <span class=${classMap({ lines: true, more: drop })}><span>${lines.map((l, n) => html`${n ? html`<br />` : nothing}${l}`)}</span>${drop ? caretS : nothing}</span></button>`;
  }

  private foot(name: string, drop = false, launch = false) {
    return html`<div class="foot"><span>${name}${drop ? caret : nothing}</span>
      ${launch ? html`<button aria-label="${name}设置">${icon(5, 5, art.launcher)}</button>` : nothing}</div>`;
  }

  private sb(a: Art, cls = "") {
    return html`<button class=${cls}>${i16(a)}</button>`;
  }
  private arr(cls = "arr") {
    return html`<button class=${cls}>${caret}</button>`;
  }

  private titleBar() {
    const q = (label: string, a: Art, cls = "") => html`<button class=${cls} aria-label=${label}>${i16(a)}</button>`;
    return html`<header class="title">
      <div class="quick">
        <button class="logo" aria-label="A">${icon(16, 18, svg`<path class="f" fill-rule="evenodd" d="M5.500 0H9.500L14.500 17H10.500L9.500 13H5.500L4 17H1ZM7.500 4 6 10H9.200Z"/><path d="M5.500 0 9.500 0 8 4 3 17H1Z" fill="#e85f58" stroke="none"/>`)}</button>
      </div>
      <div class="quick">
        <button class="appmenu" aria-label="应用程序菜单">${icon(7, 4, svg`<path class="f" d="M0 0H7L3.500 4Z"/>`)}</button>
        ${q("新建", art.newDoc)}${q("打开", art.open)}${q("保存", art.save)}${q("另存为", art.saveAs)}${q("从 Web 打开", art.openWeb)}${q("保存到 Web", art.saveWeb)}${q("打印", art.print)}${q("放弃", art.undo)}
        <button aria-label="放弃列表">${caretS}</button>
        ${q("重做", art.redo, "dim")}
        <button aria-label="重做列表">${caretS}</button>
      </div>
      <div class="workspace">${i16(gear)}${this.pick("工作空间", "草图与注释")}</div>
      <button aria-label="自定义快速访问工具栏">${icon(9, 7, svg`<path d="M0 .5H9"/><path class="f" d="M0 3H9L4.500 7Z"/>`)}</button>
      <button class="share">${i16(art.plane)}共享</button>
      <div class="caption">Autodesk AutoCAD 2022     Drawing1.dwg</div>
      <div class="search">
        ${icon(5, 8, svg`<path class="f" d="M0 0 4.500 4 0 8Z"/>`)}
        <input aria-label="搜索" placeholder="键入关键字或短语" />
        <button aria-label="搜索">${i16(art.find)}</button>
        <button class="signin">${i16(art.person)}登录</button>
        <button aria-label="登录选项">${caretS}</button>
        <button aria-label="应用商店">${i16(art.cart)}</button>
        <button aria-label="保持连接">${i16(art.adesk)}</button>
        <button aria-label="连接选项">${caretS}</button>
        <span class="rule"></span>
        <button class="help" aria-label="帮助">?</button>
        <button aria-label="帮助选项">${caretS}</button>
      </div>
      <div class="winbtns">
        <button aria-label="最小化">${i16(svg`<path d="M4 11H12" stroke-width="2"/>`)}</button>
        <button aria-label="最大化">${i16(art.max)}</button>
        <button aria-label="关闭">${i16(art.close)}</button>
      </div>
    </header>`;
  }

  private menuBar() {
    return html`<nav class="menubar" aria-label="菜单">
      ${menusLeft.map((m) => html`<button>${m}</button>`)}
      <div class="anchor">
        <button class="open">标注(N)</button>
        <div class="popup" role="menu">
          ${dimMenu.map((group, n) => html`${n ? html`<hr />` : nothing}
            ${group.map((e) => html`<button role="menuitem" class=${classMap({ hot: !!e.hot })}>
              <span class="gutter">${e.art ? i16(e.art) : nothing}</span><span class="name">${e.label}</span>
              ${e.sub ? icon(5, 8, svg`<path d="M.5.500 4 4 .5 7.500"/>`) : nothing}</button>`)}`)}
        </div>
      </div>
      ${menusRight.map((m) => html`<button>${m}</button>`)}
      <div class="mdi">
        <button aria-label="最小化图形">${i16(art.min)}</button>
        <button aria-label="还原图形">${i16(art.restore)}</button>
        <button aria-label="关闭图形">${i16(art.close)}</button>
      </div>
    </nav>`;
  }

  private ribbon() {
    return html`<div class="tabs">
        ${ribbonTabs.map((t) => html`<button class=${classMap({ on: t === "注释" })}>${t}</button>`)}
        <button class="fold" aria-label="折叠功能区">${icon(5, 3, svg`<path class="f" d="M0 3H5L2.500 0Z"/>`)}</button>
        <button class="foldmenu" aria-label="功能区选项">${caretS}</button>
      </div>
      <div class="ribbon">
        <section class="panel p1"><div class="body">
          <button class="big"><span class="art">${icon(26, 28, art.bigA)}</span><span>多行文字</span>${caretS}</button>
          <div class="rows">
            <div class="row"><span class="lead">${i16(art.spell)}</span><span class="field pick">
              <select aria-label="文字样式"><option>Standard</option></select>${caret}</span></div>
            <div class="row"><span class="lead">${i16(art.alignText)}</span><span class="field pick find">
              <input aria-label="查找文字" placeholder="查找文字" />${i16(art.findA)}</span></div>
            <div class="row"><span class="lead">${i16(art.textH)}</span><span class="field pick">
              <select aria-label="文字高度"><option>2.5</option></select>${caret}</span></div>
          </div></div>${this.foot("文字", true, true)}</section>
        <section class="panel p2"><div class="body">
          ${this.big(icon(32, 32, art.dimBig), ["标注"])}
          <div class="rows">
            <div class="row"><span class="field pick wide"><select aria-label="标注样式"><option>ISO-25</option></select>${caret}</span></div>
            <div class="row">${i16(art.layers)}<span class="field layer"><span class="swatch"></span>${this.pick("标注图层", "使用当前项")}</span></div>
            <div class="row row3"><button>${i16(art.linear)}线性</button><button aria-label="标注类型">${caretS}</button><button>${i16(art.quick)}快速</button></div>
          </div></div>${this.foot("标注", true, true)}</section>
        <section class="panel p3"><div class="body">
          ${this.big(icon(32, 32, art.centreBig), ["圆心", "标记"])}
          ${this.big(icon(32, 32, art.lineBig), ["中心线"])}
          </div>${this.foot("中心线")}</section>
        <section class="panel p4"><div class="body">
          ${this.big(icon(34, 32, art.leaderBig), ["多重引线"])}
          <div class="rows">
            <div class="row"><span class="field pick"><select aria-label="多重引线样式"><option>Standard</option></select>${caret}</span></div>
            <div class="pairs rows">
              <div class="row"><button aria-label="对齐引线">${i16(art.lead1)}</button><button>${i16(art.leadAdd)}添加引线</button></div>
              <div class="row"><button aria-label="合并引线">${i16(art.lead2)}</button><button>${i16(art.leadDel)}删除引线</button></div>
            </div>
          </div></div>${this.foot("引线", false, true)}</section>
        <section class="panel p5"><div class="body">
          ${this.big(icon(32, 27, art.tableBig), ["表格"])}
          <div class="rows">
            <div class="row"><span class="field pick"><select aria-label="表格样式"><option>Standard</option></select>${caret}</span></div>
            <div class="pairs rows">
              <div class="row"><button aria-label="从源下载">${i16(art.sheetDown)}</button><button>${i16(art.extract)}提取数据</button></div>
              <div class="row"><button aria-label="上载到源">${i16(art.sheetUp)}</button><button>${i16(art.linkData)}链接数据</button></div>
            </div>
          </div></div>${this.foot("表格", false, true)}</section>
        <section class="panel p6"><div class="body">
          ${this.big(icon(32, 32, art.wipeout), ["区域覆盖"])}
          ${this.big(icon(32, 26, art.cloudBig), ["修订", "云线"], true)}
          </div>${this.foot("标记")}</section>
        <section class="panel p7"><div class="body">
          ${this.big(icon(30, 32, art.scaleBig), ["添加", "当前比例"], true)}
          <div class="rows">
            <div class="row"><button>${i16(art.scaleList)}比例列表</button></div>
            <div class="row"><button>${i16(art.scaleAdd)}添加/删除比例</button></div>
            <div class="row"><button>${i16(art.scaleSync)}同步比例位置</button></div>
          </div></div>${this.foot("注释缩放")}</section>
      </div>`;
  }

  private navBar() {
    return html`<div class="nav">${icon(30, 210, svg`
      <circle cx="25" cy="4" r="3.500"/><path d="M23 2 27 6M27 2 23 6M4 55.500H27M4 163.500H27"/>
      <path d="M15 18.500H26V29.500A11 11 0 1 1 15 18.500Z" stroke-width="1.500"/><circle cx="15" cy="29.500" r="6" stroke-width="1.500"/><path d="M11 34 7 37.500M19 34 23 37.500"/>
      <path class="f" d="M13 48H19L16 51ZM13 118H19L16 121ZM13 156H19L16 159Z"/>
      <path stroke-width="1.500" d="M10 82C8 77 5 74 4 73 4 70 7 71 9 73L7 64C8 61 10 63 11 70L12 61C13 59 15 60 15 70L18 61C20 60 20 63 19 71L23 66C26 65 25 68 24 71 23 77 21 80 20 83Z"/>
      <path d="M5 90 19 104M19 90 5 104" stroke-width="1.500"/><path class="f" d="M3 88H8L3 93ZM20 88V93L15 88ZM3 105V100L8 105Z"/>
      <circle cx="19" cy="103" r="4.500" stroke-width="1.500"/><path d="M22.500 107 27 111" stroke-width="3"/>
      <path d="M13 148V131H10L15 126 20 131H17V148Z"/><path d="M12 134Q3 136 4 139 8 144 20 143 28 141 26 137 24 135 18 134" stroke-width="1.500"/><path class="f" d="M7 143 12 139V147Z"/>
      <path d="M4 169H9V174H4ZM12 169H17V174H12ZM20 169H25V174H20ZM4 178H19V190H4Z" stroke-width="1.500"/><path class="f" d="M9 180 16 184 9 188Z"/>
      <circle cx="25" cy="205" r="3.500"/><path d="M23 205H27"/>`)}</div>`;
  }

  private canvas() {
    return html`<div class="canvas">
      <div class="vp">[−][俯视][二维线框]</div>
      <svg class="ic drawing" width="1000" height="560" viewBox="0 0 1000 560" shape-rendering="crispEdges"><circle cx="770.500" cy="328" r="183" stroke="#fff" /></svg>
      <svg class="cube ic" viewBox="0 0 132 140">
        <circle cx="66" cy="68" r="53.500" stroke="#424950" stroke-width="13" />
        <rect x="40" y="42" width="52" height="52" fill="#afb0b1" stroke="#777b7e" />
        <rect x="50" y="52" width="32" height="32" fill="#a0a7ac" stroke="none" />
        <text class="face" x="51" y="79" stroke="none">上</text>
        <g class="hz" stroke="none"><text x="57" y="19">北</text><text x="57" y="133">南</text><text x="0" y="75">西</text><text x="113" y="75">东</text></g>
      </svg>
      <button class="wcs">WCS${icon(9, 5, svg`<path d="M.5.500H8.500L4.500 4.500Z"/>`)}</button>
      ${this.navBar()}
      <svg class="ic ucs" width="90" height="84" viewBox="0 0 90 84"><path d="M4.500 67.500H13.500V76.500H4.500ZM9.500 21V72M9 71.500H59"/><text x="11" y="18">Y</text><text x="64" y="71">X</text></svg>
      <div class="history">命令: '_dimstyle</div>
      <div class="cmd">
        <div class="handle"><span class="grip">${icon(5, 19, svg`<path stroke-width="2" stroke-dasharray="2 1" d="M1 0V18M4 0V18"/>`)}</span><button aria-label="关闭命令行">${icon(10, 10, svg`<path d="M1 1 9 9M9 1 1 9" stroke-width="2"/>`)}</button><button aria-label="自定义">${i16(art.wrench)}</button></div>
        <div class="entry">${icon(16, 13, art.prompt)}${caret}<input aria-label="命令" placeholder="键入命令" /><span class="up">${caret}</span></div>
      </div>
    </div>`;
  }

  private bottomBar() {
    return html`<footer class="bottom">
      <div class="layouts"><button class="on">模型</button><button>布局1</button><button>布局2</button><button class="plus" aria-label="新建布局">${icon(10, 10, svg`<path d="M5 1V9M1 5H9" stroke-width="2"/>`)}</button></div>
      <div class="status">
        <div class="grp coords">830.3819, 886.4705, 0.0000</div>
        <div class="grp"><button class="lab">模型</button></div>
        <div class="grp">${this.sb(st.grid)}${this.sb(st.snap)}${this.arr()}</div>
        <div class="grp">${this.sb(st.infer, "sep")}${this.sb(st.dyn, "lit")}${this.sb(st.ortho)}${this.sb(st.polar)}${this.arr()}${this.sb(st.iso)}${this.arr("arr sep")}${this.sb(st.track, "lit")}${this.sb(st.osnap, "lit")}${this.arr()}${this.sb(st.weight)}${this.sb(st.transp, "lit")}</div>
        <div class="grp">${this.sb(st.cycle, "sep")}${this.sb(st.cube)}${this.arr()}</div>
        <div class="grp">${this.sb(st.ducs, "lit")}${this.sb(st.filter)}${this.arr()}${this.sb(st.gizmo, "lit")}${this.arr()}</div>
        <div class="grp">${this.sb(st.annVis, "lit")}${this.sb(st.annAuto)}${this.sb(arrowhead)}<button class="scale">1:1 / 100%${caret}</button></div>
        <div class="grp">${this.sb(gear)}${this.arr("arr sep")}${this.sb(st.plus)}</div>
        <div class="grp"><label class="units">${icon(8, 16, st.ruler)}<select aria-label="单位"><option>小数</option></select>${caret}</label>${this.sb(st.props)}</div>
        <div class="grp">${this.sb(st.lock)}${this.arr()}</div>
        <div class="grp">${this.sb(st.isolate)}</div>
        <div class="grp">${this.sb(st.perf, "lit")}</div>
        <div class="grp">${this.sb(st.full)}${this.sb(st.burger)}</div>
      </div>
    </footer>`;
  }

  private overlays() {
    return html`
      <div class="ime"><div><span>CH</span>${icon(11, 14, svg`<path d="M4 1Q5 8 1 11 6 13 8.500 9 10 4.500 4 1Z"/>`)}<span>简</span></div></div>
      <svg class="mark ic" width="152" height="46" viewBox="0 0 152 46">
        <defs><linearGradient id="sw" x1="0" y1="0" x2="1" y2="0"><stop offset="0" stop-color="#17539a"/><stop offset="1" stop-color="#1c8fb0"/></linearGradient>
        <linearGradient id="sg" x1="0" y1="1" x2="1" y2="0"><stop offset="0" stop-color="#8a8a2a"/><stop offset="1" stop-color="#1f7a3c"/></linearGradient></defs>
        <path d="M2 34C-2 18 12 2 44 0 26 5 10 16 8 28 10 31 16 27 22 26 16 32 6 36 2 34Z" fill="url(#sw)" fill-opacity=".85" stroke="none"/>
        <path d="M20 21C26 14 38 13 41 19 44 27 26 38 2 39 18 34 31 28 31 22 29 19 24 20 20 21Z" fill="url(#sg)" fill-opacity=".85" stroke="none"/>
        <text x="43" y="19" font-size="21" font-weight="700" fill="#174f8e" stroke="none" font-family="Noto Sans CJK SC, sans-serif">极光下载站</text>
        <text x="4" y="41" font-size="21" font-weight="700" fill="#12803c" fill-opacity=".55" stroke="none" font-family="Liberation Sans, sans-serif">www.xz7.com</text>
      </svg>
      <svg class="over" width="720" height="600" viewBox="3 1 720 600">
        <defs><filter id="sh" x="-10%" y="-10%" width="130%" height="130%"><feDropShadow dx="2" dy="2" stdDeviation="2" flood-color="#000" flood-opacity=".8"/></filter></defs>
        <g fill="#f00" filter="url(#sh)">
          <path d="M674 36 519 20 520 15 495 17.500 518 27 518.500 23 673.500 38.500Z" />
          <path d="M396 118.500 452 63 448 60 470 47.500 461 70 455 66 398 121Z" />
          <path d="M387 429.500 456.500 520.500 454 524 476.500 543.500 467 514 460 518 389 428Z" />
        </g>
        <path d="M587.500 555.500V571.500L591.500 568 594.500 574 597.500 572.500 594.500 566.500H599.500Z" fill="#fff" stroke="#111" />
      </svg>`;
  }

  render() {
    return html`<div class="window">
      ${this.titleBar()}${this.menuBar()}${this.ribbon()}
      <div class="docs">
        <div class="doc"><a href="#start">开始</a></div>
        <div class="doc on"><a href="#drawing">Drawing1*</a><button aria-label="关闭选项卡">${icon(8, 8, svg`<path d="M0 0 8 8M8 0 0 8" stroke-width="2"/>`)}</button></div>
        <button class="adddoc" aria-label="新图形">${icon(8, 8, svg`<path d="M4 0V8M0 4H8" stroke-width="2"/>`)}</button>
      </div>
      <main class="main">
        <div class="side"><div class="tools"><div class="grip">${icon(14, 5, svg`<path stroke-dasharray="1 1" d="M0 .5H14M0 2.500H14M0 4.500H14"/>`)}</div>${drawTools.map(([n, a]) => html`<button aria-label=${n}>${i16(a)}</button>`)}</div></div>
        ${this.canvas()}
      </main>
      ${this.bottomBar()}${this.overlays()}
    </div>`;
  }
}
